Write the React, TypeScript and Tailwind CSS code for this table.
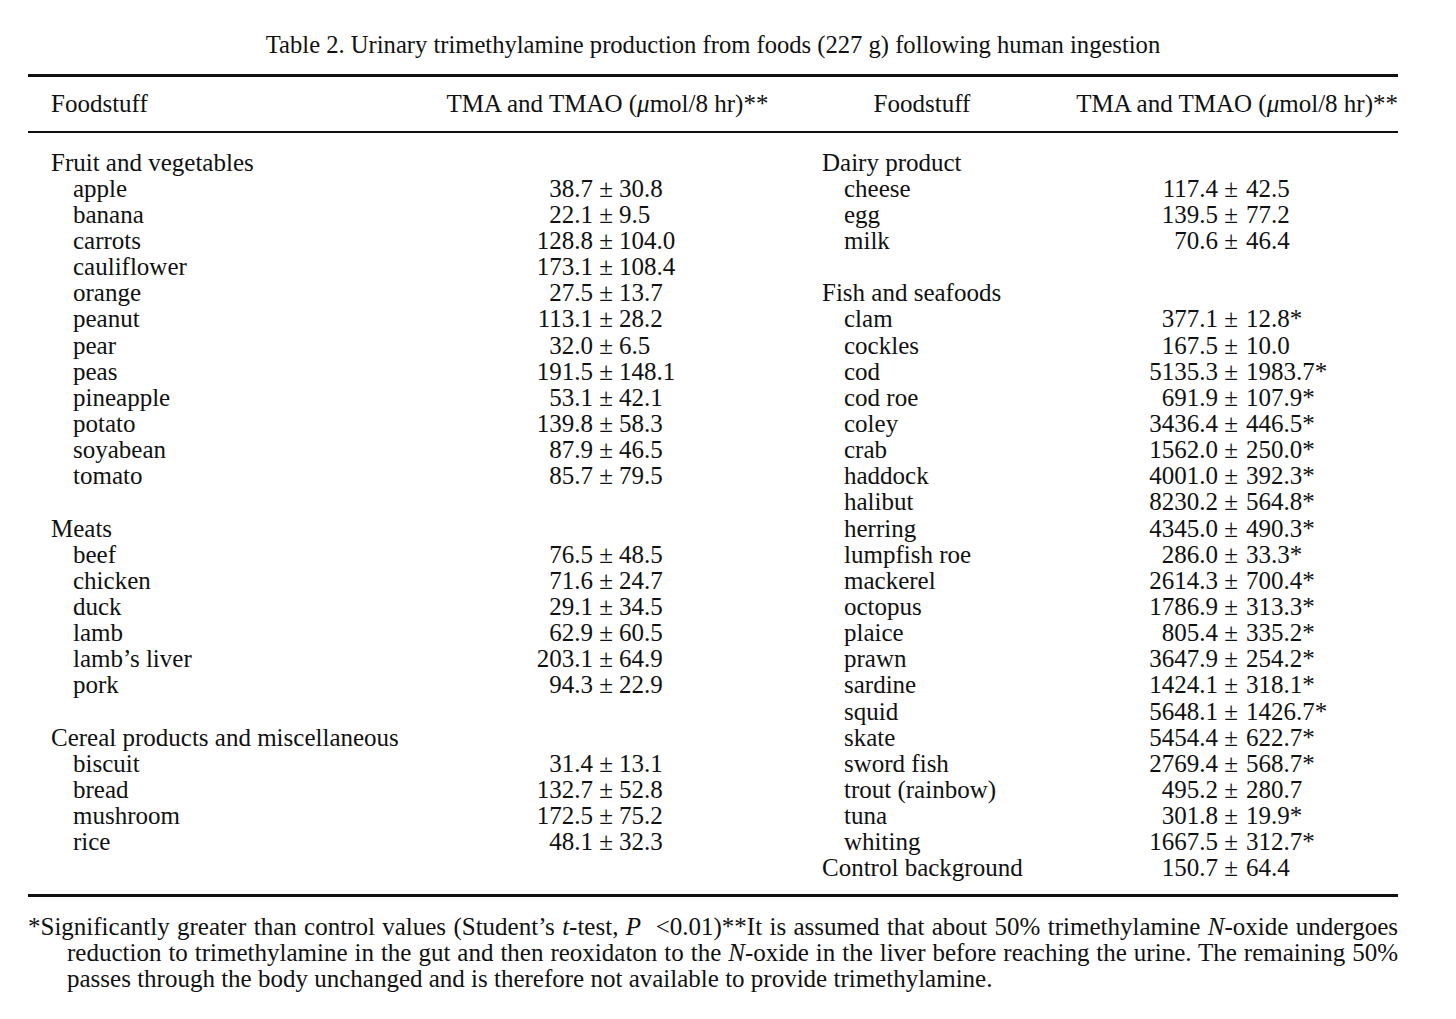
import React from "react";

type Row =
  | { kind: "cat"; name: string; a?: string; b?: string }
  | { kind: "item"; name: string; a: string; b: string }
  | { kind: "blank" };

const leftRows: Row[] = [
  { kind: "cat", name: "Fruit and vegetables" },
  { kind: "item", name: "apple", a: "38.7", b: "30.8" },
  { kind: "item", name: "banana", a: "22.1", b: "9.5" },
  { kind: "item", name: "carrots", a: "128.8", b: "104.0" },
  { kind: "item", name: "cauliflower", a: "173.1", b: "108.4" },
  { kind: "item", name: "orange", a: "27.5", b: "13.7" },
  { kind: "item", name: "peanut", a: "113.1", b: "28.2" },
  { kind: "item", name: "pear", a: "32.0", b: "6.5" },
  { kind: "item", name: "peas", a: "191.5", b: "148.1" },
  { kind: "item", name: "pineapple", a: "53.1", b: "42.1" },
  { kind: "item", name: "potato", a: "139.8", b: "58.3" },
  { kind: "item", name: "soyabean", a: "87.9", b: "46.5" },
  { kind: "item", name: "tomato", a: "85.7", b: "79.5" },
  { kind: "blank" },
  { kind: "cat", name: "Meats" },
  { kind: "item", name: "beef", a: "76.5", b: "48.5" },
  { kind: "item", name: "chicken", a: "71.6", b: "24.7" },
  { kind: "item", name: "duck", a: "29.1", b: "34.5" },
  { kind: "item", name: "lamb", a: "62.9", b: "60.5" },
  { kind: "item", name: "lamb\u2019s liver", a: "203.1", b: "64.9" },
  { kind: "item", name: "pork", a: "94.3", b: "22.9" },
  { kind: "blank" },
  { kind: "cat", name: "Cereal products and miscellaneous" },
  { kind: "item", name: "biscuit", a: "31.4", b: "13.1" },
  { kind: "item", name: "bread", a: "132.7", b: "52.8" },
  { kind: "item", name: "mushroom", a: "172.5", b: "75.2" },
  { kind: "item", name: "rice", a: "48.1", b: "32.3" },
];

const rightRows: Row[] = [
  { kind: "cat", name: "Dairy product" },
  { kind: "item", name: "cheese", a: "117.4", b: "42.5" },
  { kind: "item", name: "egg", a: "139.5", b: "77.2" },
  { kind: "item", name: "milk", a: "70.6", b: "46.4" },
  { kind: "blank" },
  { kind: "cat", name: "Fish and seafoods" },
  { kind: "item", name: "clam", a: "377.1", b: "12.8*" },
  { kind: "item", name: "cockles", a: "167.5", b: "10.0" },
  { kind: "item", name: "cod", a: "5135.3", b: "1983.7*" },
  { kind: "item", name: "cod roe", a: "691.9", b: "107.9*" },
  { kind: "item", name: "coley", a: "3436.4", b: "446.5*" },
  { kind: "item", name: "crab", a: "1562.0", b: "250.0*" },
  { kind: "item", name: "haddock", a: "4001.0", b: "392.3*" },
  { kind: "item", name: "halibut", a: "8230.2", b: "564.8*" },
  { kind: "item", name: "herring", a: "4345.0", b: "490.3*" },
  { kind: "item", name: "lumpfish roe", a: "286.0", b: "33.3*" },
  { kind: "item", name: "mackerel", a: "2614.3", b: "700.4*" },
  { kind: "item", name: "octopus", a: "1786.9", b: "313.3*" },
  { kind: "item", name: "plaice", a: "805.4", b: "335.2*" },
  { kind: "item", name: "prawn", a: "3647.9", b: "254.2*" },
  { kind: "item", name: "sardine", a: "1424.1", b: "318.1*" },
  { kind: "item", name: "squid", a: "5648.1", b: "1426.7*" },
  { kind: "item", name: "skate", a: "5454.4", b: "622.7*" },
  { kind: "item", name: "sword fish", a: "2769.4", b: "568.7*" },
  { kind: "item", name: "trout (rainbow)", a: "495.2", b: "280.7" },
  { kind: "item", name: "tuna", a: "301.8", b: "19.9*" },
  { kind: "item", name: "whiting", a: "1667.5", b: "312.7*" },
  { kind: "cat", name: "Control background", a: "150.7", b: "64.4" },
];

function Value({ a, b, side }: { a?: string; b?: string; side: "l" | "r" }) {
  if (!a) return null;
  return (
    <div className="flex items-center whitespace-nowrap">
      <span className={side === "l" ? "w-[163px] text-right" : "w-[159px] text-right"}>{a}</span>
      <span className="ml-[4px] w-[18px] text-center">±</span>
      <span className={side === "l" ? "ml-[4px]" : "ml-[6px]"}>{b}</span>
    </div>
  );
}

function Half({ rows, side }: { rows: Row[]; side: "l" | "r" }) {
  const nameW = side === "l" ? "w-[402px]" : "w-[274px]";
  const catPad = side === "l" ? "pl-[23px]" : "pl-[37px]";
  const itemPad = side === "l" ? "pl-[45px]" : "pl-[59px]";
  return (
    <div className="flex flex-col">
      {rows.map((r, i) => (
        <div key={i} className="flex h-[26.15px] items-center whitespace-nowrap">
          {r.kind === "blank" ? null : (
            <>
              <div className={`${nameW} ${r.kind === "cat" ? catPad : itemPad}`}>{r.name}</div>
              <Value a={r.a} b={r.b} side={side} />
            </>
          )}
        </div>
      ))}
    </div>
  );
}

export default function App() {
  return (
    <div
      className="min-h-[1019px] w-[1456px] bg-white text-[#111] pt-[30px]"
      style={{ fontFamily: '"Liberation Serif", "Times New Roman", serif' }}
    >
      <div className="ml-[28px] w-[1370px] text-[25px]">
        <div className="h-[30px] whitespace-nowrap text-center text-[24.6px] leading-[30px]">
          Table 2. Urinary trimethylamine production from foods (227 g) following human ingestion
        </div>
        <div className="mt-[14px] h-[3px] bg-[#111]" />
        <div className="flex h-[54px] items-center whitespace-nowrap">
          <div className="w-[402px] pl-[23px]">Foodstuff</div>
          <div className="w-[355px] text-center">
            TMA and TMAO (<i>μ</i>mol/8 hr)**
          </div>
          <div className="w-[274px] text-center">Foodstuff</div>
          <div className="w-[339px] text-right">
            TMA and TMAO (<i>μ</i>mol/8 hr)**
          </div>
        </div>
        <div className="h-[2px] bg-[#111]" />
        <div className="flex pt-[16px] pb-[13px] leading-none">
          <div className="w-[757px]">
            <Half rows={leftRows} side="l" />
          </div>
          <div className="w-[613px]">
            <Half rows={rightRows} side="r" />
          </div>
        </div>
        <div className="h-[3px] bg-[#111]" />
        <div className="mt-[17px] leading-[26px]">
          <div className="whitespace-nowrap text-justify [text-align-last:justify]">
            *Significantly greater than control values (Student’s <i>t</i>-test, <i>P</i>&nbsp;&nbsp;&lt;0.01)**It is
            assumed that about 50% trimethylamine <i>N</i>-oxide undergoes
          </div>
          <div className="pl-[39px] whitespace-nowrap text-justify [text-align-last:justify]">
            reduction to trimethylamine in the gut and then reoxidaton to the <i>N</i>-oxide in the liver before
            reaching the urine. The remaining 50%
          </div>
          <div className="pl-[39px] whitespace-nowrap">
            passes through the body unchanged and is therefore not available to provide trimethylamine.
          </div>
        </div>
      </div>
    </div>
  );
}
